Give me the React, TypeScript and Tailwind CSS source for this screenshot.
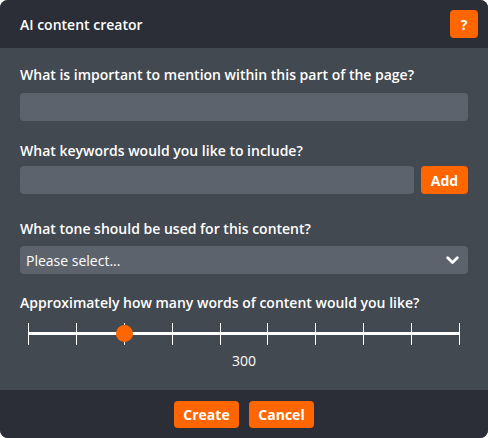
import React from "react";

const ticks = [0, 1, 2, 3, 4, 5, 6, 7, 8, 9];

export default function App() {
  return (
    <div className="w-[488px] h-[438px] bg-white" style={{ fontFamily: '"Open Sans", sans-serif' }}>
      <div className="flex h-full flex-col overflow-hidden rounded-[8px] bg-[#434950]">
        <div className="flex h-[48px] items-center justify-between bg-[#2b2e36] pl-[20px] pr-[10px]">
          <span className="text-[14px] font-semibold text-white">AI content creator</span>
          <button className="flex h-[28px] w-[28px] items-center justify-center rounded-[4px] bg-[#ff6600] text-[14px] font-bold text-white">
            ?
          </button>
        </div>
        <div className="flex flex-1 flex-col px-[20px] pt-[17px]">
          <label className="text-[14px] font-semibold leading-[20px] text-white">
            What is important to mention within this part of the page?
          </label>
          <div className="mt-[8px] h-[28px] rounded-[4px] bg-[#5d636d]" />

          <label className="mt-[20px] text-[14px] font-semibold leading-[20px] text-white">
            What keywords would you like to include?
          </label>
          <div className="mt-[5px] flex gap-[7px]">
            <div className="h-[28px] flex-1 rounded-[4px] bg-[#5d636d]" />
            <button className="h-[28px] w-[47px] rounded-[4px] bg-[#ff6600] text-[14px] font-bold text-white">
              Add
            </button>
          </div>

          <label className="mt-[25px] text-[14px] font-semibold leading-[20px] text-white">
            What tone should be used for this content?
          </label>
          <div className="mt-[7px] flex h-[28px] items-center justify-between rounded-[4px] bg-[#5d636d] pl-[6px] pr-[9px]">
            <span className="text-[14px] text-white">Please select...</span>
            <svg width="13" height="9" viewBox="0 0 13 9">
              <path d="M1.7 1.7 L6.5 6.5 L11.3 1.7" fill="none" stroke="white" strokeWidth="2.8" strokeLinecap="round" strokeLinejoin="round" />
            </svg>
          </div>

          <label className="mt-[19px] text-[14px] font-semibold leading-[20px] text-white">
            Approximately how many words of content would you like?
          </label>
          <div className="relative mx-[8px] mt-[10px] h-[22px]">
            <div className="absolute left-0 right-0 top-[9px] h-[3px] bg-white" />
            {ticks.map((t) => (
              <div
                key={t}
                className="absolute top-0 h-[22px] w-[1px] bg-white"
                style={{ left: `${(t / 9) * 431}px` }}
              />
            ))}
            <div
              className="absolute top-[2px] h-[17px] w-[17px] rounded-full bg-[#ff6600]"
              style={{ left: `${(2 / 9) * 431 - 8}px` }}
            />
          </div>
          <div className="mt-[6px] text-center text-[14px] leading-[20px] text-white">300</div>
        </div>
        <div className="flex h-[48px] items-center justify-center gap-[10px] bg-[#2b2e36]">
          <button className="h-[27px] w-[65px] rounded-[4px] bg-[#ff6600] text-[14px] font-bold text-white">
            Create
          </button>
          <button className="h-[27px] w-[65px] rounded-[4px] bg-[#ff6600] text-[14px] font-bold text-white">
            Cancel
          </button>
        </div>
      </div>
    </div>
  );
}
